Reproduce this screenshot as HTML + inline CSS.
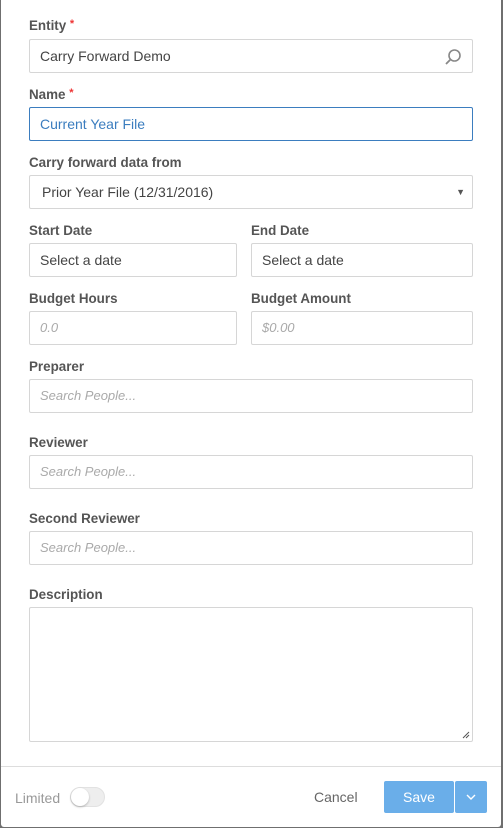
<!DOCTYPE html>
<html><head><style>
body{margin:0;width:503px;height:828px;background:#6f6f6f;font-family:"Liberation Sans",sans-serif;overflow:hidden;position:relative}
.m{position:absolute;left:1px;top:0;width:500px;height:827px;background:#fff;border-radius:0 0 3px 3px}
.l{position:absolute;left:28px;font-size:13.4px;font-weight:bold;color:#555}
.l span{color:#e33;font-size:11px;vertical-align:top}
.i{position:absolute;box-sizing:border-box;border:1px solid #d6d6d6;border-radius:2px;height:34px;font-size:14px;color:#444;padding:0 10px;line-height:32px;background:#fff}
.p{color:#aaa;font-style:italic;font-size:13px}
</style></head><body><div class="m">
<div class="l" style="top:18px">Entity <span>*</span></div>
<div class="i" style="left:28px;top:39px;width:444px">Carry Forward Demo
<svg style="position:absolute;right:10px;top:8px" width="18" height="18" viewBox="0 0 18 18"><circle cx="10.5" cy="7.5" r="5.5" fill="none" stroke="#888" stroke-width="1.6"/><line x1="6.6" y1="11.4" x2="2" y2="16" stroke="#888" stroke-width="1.8"/></svg></div>
<div class="l" style="top:87px">Name <span>*</span></div>
<div class="i" style="left:28px;top:107px;width:444px;border-color:#3b7dbf;color:#3b7dbf">Current Year File</div>
<div class="l" style="top:155px">Carry forward data from</div>
<div class="i" style="left:28px;top:175px;width:444px;padding-left:12px">Prior Year File (12/31/2016)<span style="position:absolute;right:7px;top:0;font-size:9px;color:#555">▼</span></div>
<div class="l" style="top:223px">Start Date</div>
<div class="l" style="top:223px;left:250px">End Date</div>
<div class="i" style="left:28px;top:243px;width:208px">Select a date</div>
<div class="i" style="left:250px;top:243px;width:222px">Select a date</div>
<div class="l" style="top:291px">Budget Hours</div>
<div class="l" style="top:291px;left:250px">Budget Amount</div>
<div class="i p" style="left:28px;top:311px;width:208px">0.0</div>
<div class="i p" style="left:250px;top:311px;width:222px">$0.00</div>
<div class="l" style="top:359px">Preparer</div>
<div class="i p" style="left:28px;top:379px;width:444px">Search People...</div>
<div class="l" style="top:435px">Reviewer</div>
<div class="i p" style="left:28px;top:455px;width:444px">Search People...</div>
<div class="l" style="top:511px">Second Reviewer</div>
<div class="i p" style="left:28px;top:531px;width:444px">Search People...</div>
<div class="l" style="top:587px">Description</div>
<div class="i" style="left:28px;top:607px;width:444px;height:135px"><svg style="position:absolute;right:2px;bottom:2px" width="8" height="8"><path d="M1 7L7 1M4 7L7 4" stroke="#555"/></svg></div>
<div style="position:absolute;left:0;top:766px;width:500px;height:1px;background:#ddd"></div>
<div style="position:absolute;left:14px;top:790px;font-size:14px;color:#999">Limited</div>
<div style="position:absolute;left:69px;top:787px;width:35px;height:20px;border-radius:10px;background:#eee;border:1px solid #e2e2e2;box-sizing:border-box"><div style="position:absolute;left:0;top:0;width:18px;height:18px;border-radius:50%;background:#fff;box-shadow:0 1px 2px rgba(0,0,0,.25)"></div></div>
<div style="position:absolute;left:313px;top:789px;font-size:14px;color:#666">Cancel</div>
<div style="position:absolute;left:383px;top:781px;width:70px;height:32px;background:#6aaee9;border-radius:2px;color:#fff;font-size:14px;text-align:center;line-height:32px">Save</div>
<div style="position:absolute;left:454px;top:781px;width:32px;height:32px;background:#6aaee9;border-radius:2px"><svg style="position:absolute;left:11px;top:13px" width="10" height="6"><path d="M1 1L5 5L9 1" fill="none" stroke="#fff" stroke-width="1.4"/></svg></div>
</div></body></html>
